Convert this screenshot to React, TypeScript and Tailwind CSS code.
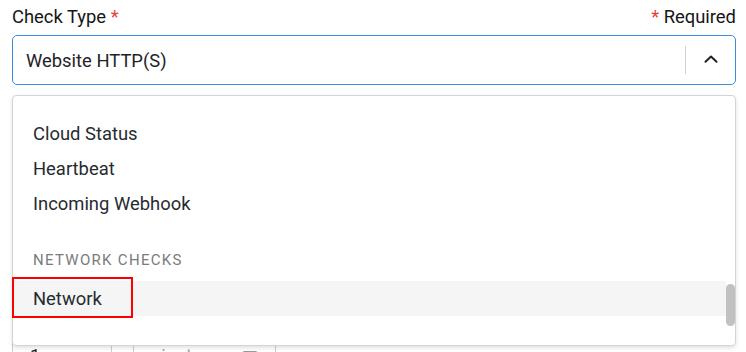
import React from "react";

const groupOneItems = ["Cloud Status", "Heartbeat", "Incoming Webhook"];

// chevron on the right of the select, pointing up while the menu is open
const ChevronUp = () => (
    <svg width="14" height="8" viewBox="0 0 14 8" fill="none">
        <path
            d="M1.5 6.8L7 1.6L12.5 6.8"
            stroke="#1f2328"
            strokeWidth="2"
            strokeLinecap="round"
            strokeLinejoin="round"
        />
    </svg>
);

const App = () => {
    return (
        <div
            className="relative h-[352px] w-[746px] overflow-hidden bg-white pl-[12px] pr-[10px] pt-[5px]"
            style={{ fontFamily: "Roboto, 'Noto Sans', sans-serif" }}
        >
            <div className="flex h-[24px] items-center justify-between text-[18.4px] leading-[24px] text-[#161616]">
                <label>
                    Check Type <span className="text-[#e53e3e]">*</span>
                </label>
                <span>
                    <span className="text-[#e53e3e]">*</span> Required
                </span>
            </div>

            <div className="mt-[6px] flex h-[50px] items-center rounded-[5px] border border-[#3c8dde] bg-white">
                <span className="flex-1 pl-[13px] pt-[1px] text-[18.4px] text-[#1f2328]">
                    Website HTTP(S)
                </span>
                <div className="h-[28px] w-px bg-[#d0d0d0]" />
                <div className="flex w-[49px] items-center justify-center pb-[2px]">
                    <ChevronUp />
                </div>
            </div>

            {/* fields underneath the open menu */}
            <div className="mt-[246px] flex items-start gap-[21px]">
                <div className="flex h-[50px] w-[100px] items-center rounded-[4px] border border-[#cfcfcf] pl-[17px] text-[18.4px] text-[#1f2328]">
                    1
                </div>
                <div className="flex h-[50px] w-[143px] items-center justify-between rounded-[4px] border border-[#cfcfcf] pl-[11px] pr-[17px] text-[18.4px] text-[#a0a0a0]">
                    <span>minutes</span>
                    <span className="mt-[4px] h-[14px] w-[16px] rounded-[3px] border-2 border-[#9a9a9a]" />
                </div>
            </div>

            {/* open menu */}
            <div className="absolute left-[12px] top-[95px] flex h-[251px] w-[724px] rounded-[4px] border border-[#d4d4d4] bg-white shadow-[0_2px_4px_rgba(0,0,0,0.12)]">
                <div className="flex-1 pt-[20px]">
                    {groupOneItems.map((item) => (
                        <div
                            key={item}
                            className="flex h-[35px] items-center px-[20px] pt-[1px] text-[18.4px] text-[#262b30]"
                        >
                            {item}
                        </div>
                    ))}
                    <div className="px-[20px] pb-[13px] pt-[31px] text-[15px] leading-[16px] tracking-[1.3px] text-[#7b7b7b]">
                        NETWORK CHECKS
                    </div>
                    <div className="flex h-[35px] items-center bg-[#f5f5f5] px-[20px] pt-[1px] text-[18.4px] text-[#262b30]">
                        Network
                    </div>
                </div>
                <div className="w-[9px]">
                    <div className="mt-[188px] h-[42px] w-[9px] rounded-full bg-[#c1c1c1]" />
                </div>
            </div>

            {/* highlight annotation */}
            <div className="absolute left-[12px] top-[277px] h-[41px] w-[121px] border-2 border-[#ff0000]" />
        </div>
    );
};

export default App;
